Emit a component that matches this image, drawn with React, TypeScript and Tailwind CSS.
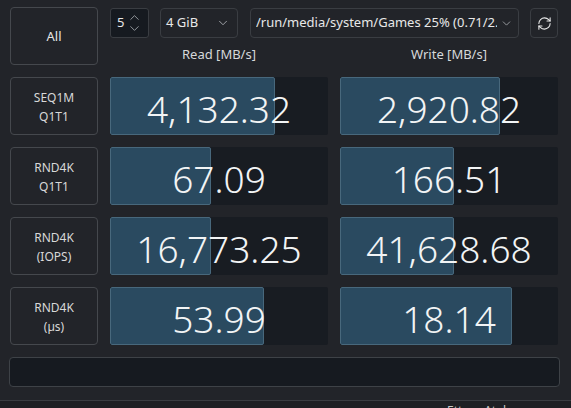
import { ChevronDown, ChevronUp, RefreshCw } from "lucide-react";

interface Result {
  name: string[];
  read: string;
  readPct: number;
  write: string;
  writePct: number;
}

const results: Result[] = [
  { name: ["SEQ1M", "Q1T1"], read: "4,132.32", readPct: 75.7, write: "2,920.82", writePct: 73.4 },
  { name: ["RND4K", "Q1T1"], read: "67.09", readPct: 46.3, write: "166.51", writePct: 52.3 },
  { name: ["RND4K", "(IOPS)"], read: "16,773.25", readPct: 46.3, write: "41,628.68", writePct: 52.3 },
  { name: ["RND4K", "(µs)"], read: "53.99", readPct: 70.6, write: "18.14", writePct: 78.9 },
];

function Bar({ value, pct }: { value: string; pct: number }) {
  return (
    <div className="relative h-[58px] bg-[#181c22] rounded-[2px] overflow-hidden">
      <div
        className="absolute left-0 top-0 bottom-0 bg-[#2a4a60] border border-[#48687c] rounded-[2px]"
        style={{ width: `${pct}%` }}
      />
      <div className="relative h-full flex items-center justify-center text-[37px] font-light text-[#f2f4f5] leading-none pt-[5px]">
        {value}
      </div>
    </div>
  );
}

export default function App() {
  return (
    <div
      className="w-[571px] h-[408px] bg-[#222429] overflow-hidden flex flex-col"
      style={{ fontFamily: '"Noto Sans", "Open Sans", sans-serif' }}
    >
      <div className="pl-[10px] pt-[7px] grid grid-cols-[88px_218px_218px] gap-3">
        <button className="h-[58px] border border-[#45484d] rounded-[4px] text-[13px] text-[#e4e4e4] pt-[2px]">
          All
        </button>
        <div className="col-span-2 flex flex-col">
          <div className="mt-[1px] h-[30px] flex items-stretch text-[13px] text-[#e8e8e8]">
            <div className="w-[39px] bg-[#161a20] border border-[#3a3d42] rounded-[3px] flex items-center pl-[6px]">
              <span>5</span>
              <div className="ml-[3px] flex flex-col text-[#b8bcc0]">
                <ChevronUp size={15} strokeWidth={1.2} className="-mb-[4px]" />
                <ChevronDown size={15} strokeWidth={1.2} />
              </div>
            </div>
            <div className="ml-[11px] w-[78px] border border-[#3a3d42] rounded-[4px] flex items-center justify-between pl-[5px] pr-[7px]">
              <span>4 GiB</span>
              <ChevronDown size={14} strokeWidth={1.4} className="text-[#b8bcc0]" />
            </div>
            <div className="ml-[12px] w-[269px] border border-[#3a3d42] rounded-[4px] flex items-center pl-[5px] pr-[5px] overflow-hidden">
              <span className="flex-1 whitespace-nowrap overflow-hidden">/run/media/system/Games 25% (0.71/2.78 TiB)</span>
              <ChevronDown size={13} strokeWidth={1.4} className="text-[#b8bcc0] shrink-0 ml-[3px]" />
            </div>
            <div className="ml-[11px] w-[28px] border border-[#3a3d42] rounded-[4px] flex items-center justify-center">
              <RefreshCw size={15} strokeWidth={1.7} className="text-[#e8e8e8]" />
            </div>
          </div>
          <div className="mt-[7px] grid grid-cols-2 gap-3 text-[13px] text-[#d6d8da]">
            <div className="text-center">Read [MB/s]</div>
            <div className="text-center">Write [MB/s]</div>
          </div>
        </div>

        {results.map((r) => (
          <div key={r.name.join()} className="contents">
            <button className="h-[58px] border border-[#45484d] rounded-[4px] text-[12px] leading-[19px] text-[#d8d8d8] flex flex-col items-center justify-center pt-[1px]">
              <span>{r.name[0]}</span>
              <span>{r.name[1]}</span>
            </button>
            <Bar value={r.read} pct={r.readPct} />
            <Bar value={r.write} pct={r.writePct} />
          </div>
        ))}
      </div>

      <div className="ml-[9px] mt-3 w-[551px] h-[30px] bg-[#161a20] border border-[#3e4247] rounded-[4px]" />

      <div className="mt-auto h-[8px] border-t border-[#3a3d42] bg-[#1e2024] relative overflow-hidden">
        <div className="absolute left-[447px] top-[4px] text-[12px] leading-none text-[#c8c8c8] whitespace-nowrap">
          Ettore Atalan
        </div>
      </div>
    </div>
  );
}
